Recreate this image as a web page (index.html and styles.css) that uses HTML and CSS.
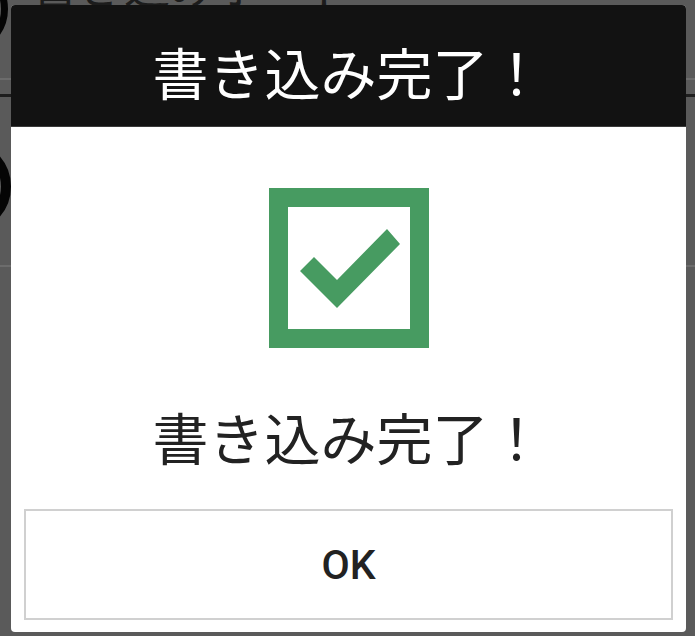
FILE: index.html
```html
<!DOCTYPE html>
<html lang="ja">
<head>
    <meta charset="UTF-8">
    <meta name="viewport" content="width=device-width, initial-scale=1.0">
    <title>書き込み完了</title>
    <link rel="stylesheet" href="styles.css">
</head>
<body>

    <div class="screen">
        <div class="list">
            <div class="list-row first">
                <span class="ring"></span>
                <span class="row-title">書き込みボード</span>
            </div>
            <div class="sep light"></div>
            <div class="sep dark"></div>
            <div class="list-row second">
                <span class="ring"></span>
            </div>
            <div class="sep light"></div>
        </div>

        <div class="dialog">
            <div class="dialog-header">書き込み完了！</div>
            <div class="dialog-body">
                <svg class="check-icon" viewBox="0 0 160 160" width="160" height="160">
                    <rect x="9.5" y="9.5" width="141" height="141" fill="none" stroke="#479b61" stroke-width="19"/>
                    <polygon points="31,83 45,69 68,92 118,41 131,56 68,120" fill="#479b61"/>
                </svg>
                <div class="message">書き込み完了！</div>
                <button class="ok-button">OK</button>
            </div>
        </div>
    </div>

</body>
</html>
```

FILE: styles.css
```css
* {
    margin: 0;
    padding: 0;
    box-sizing: border-box;
}

body {
    background: #5a5a5a;
    font-family: "Noto Sans CJK JP", "Noto Sans", sans-serif;
    overflow: hidden;
}

.screen {
    position: relative;
    width: 695px;
    height: 636px;
    overflow: hidden;
}

/* dimmed list behind the dialog */
.list-row {
    display: flex;
    gap: 24px;
}

.list-row.first {
    height: 108px;
    margin-top: -30px;
    align-items: flex-start;
}

.list-row.first .ring {
    margin-top: -6px;
}

.list-row.second {
    height: 168px;
    align-items: center;
    padding-top: 10px;
}

.ring {
    display: block;
    flex-shrink: 0;
    width: 90px;
    height: 90px;
    margin-left: -82px;
    border: 7px solid #050505;
    border-radius: 50%;
}

.list-row.second .ring {
    width: 93px;
    height: 93px;
    border-width: 10px;
}

.row-title {
    margin-top: -10px;
    font-size: 46px;
    line-height: 1;
    color: #1c1c1c;
}

.sep.light {
    height: 2px;
    background: #6c6c6c;
}

.sep.dark {
    height: 3px;
    margin-top: 14px;
    background: #1e1e1e;
}

/* dialog */
.dialog {
    position: absolute;
    left: 11px;
    top: 5px;
    width: 675px;
    height: 627px;
    background: #fff;
    border-radius: 4px;
    overflow: hidden;
    display: flex;
    flex-direction: column;
}

.dialog-header {
    height: 122px;
    background: #121212;
    color: #fff;
    font-size: 56px;
    line-height: 56px;
    text-align: center;
    padding-top: 38px;
    border-bottom: 1px solid #3a3a3a;
}

.dialog-body {
    flex: 1;
    display: flex;
    flex-direction: column;
    align-items: center;
    padding: 61px 13px 12px;
}

.check-icon {
    display: block;
}

.message {
    margin-top: 60px;
    font-size: 56px;
    line-height: 56px;
    color: #222;
}

.ok-button {
    margin-top: auto;
    width: 100%;
    height: 111px;
    background: #fff;
    border: 2px solid #d0d0d0;
    font-family: Roboto, "Noto Sans", sans-serif;
    font-size: 41px;
    font-weight: 500;
    color: #222;
}
```
